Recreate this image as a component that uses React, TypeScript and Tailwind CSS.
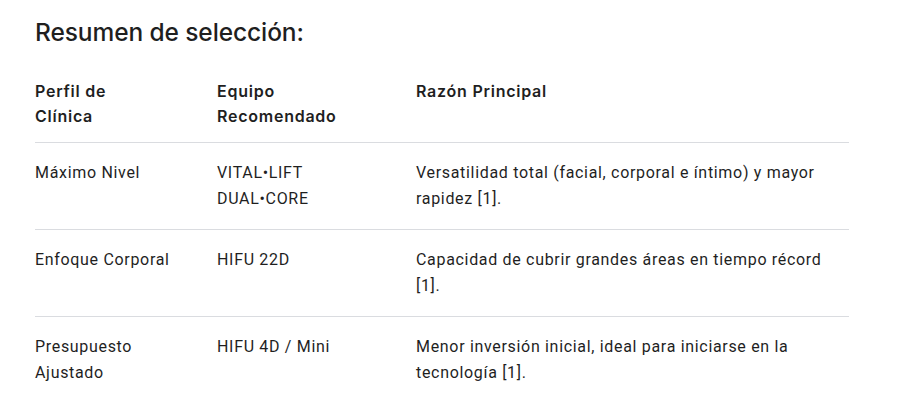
const rows = [
  {
    perfil: ["Máximo Nivel"],
    equipo: ["VITAL•LIFT", "DUAL•CORE"],
    razon: "Versatilidad total (facial, corporal e íntimo) y mayor rapidez [1].",
  },
  {
    perfil: ["Enfoque Corporal"],
    equipo: ["HIFU 22D"],
    razon: "Capacidad de cubrir grandes áreas en tiempo récord [1].",
  },
  {
    perfil: ["Presupuesto", "Ajustado"],
    equipo: ["HIFU 4D / Mini"],
    razon: "Menor inversión inicial, ideal para iniciarse en la tecnología [1].",
  },
];

export default function App() {
  return (
    <div className="min-h-screen bg-white px-[35px] pt-[15px] text-[#1f1f1f]">
      <h2 className="font-['Inter',sans-serif] text-[24.5px] font-medium leading-[34px] tracking-[-0.1px]">
        Resumen de selección:
      </h2>
      <table className="mt-[30px] w-[814px] border-collapse text-left">
        <thead>
          <tr className="font-['Inter',sans-serif] text-[16px] font-semibold leading-[25px] tracking-[0.75px]">
            <th className="w-[182px] pb-[13px] pr-4 align-top font-semibold">
              Perfil de
              <br />
              Clínica
            </th>
            <th className="w-[199px] pb-[13px] pr-4 align-top font-semibold">
              Equipo
              <br />
              Recomendado
            </th>
            <th className="pb-[13px] align-top font-semibold">Razón Principal</th>
          </tr>
        </thead>
        <tbody className="font-['Roboto',sans-serif] text-[16px] leading-[26px] tracking-[0.68px]">
          {rows.map((r, i) => (
            <tr key={i} className="border-t border-[#dadce0]">
              <td className="pt-[17px] pb-[17px] pr-4 align-top">
                {r.perfil.map((p, j) => (
                  <div key={j}>{p}</div>
                ))}
              </td>
              <td className="pt-[17px] pb-[17px] pr-4 align-top">
                {r.equipo.map((p, j) => (
                  <div key={j}>{p}</div>
                ))}
              </td>
              <td className="pt-[17px] pb-[17px] pr-[8px] align-top">{r.razon}</td>
            </tr>
          ))}
        </tbody>
      </table>
    </div>
  );
}
